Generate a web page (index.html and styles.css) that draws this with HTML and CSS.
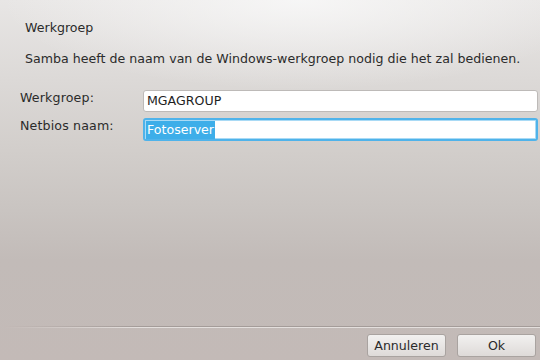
FILE: index.html
```html
<!DOCTYPE html>
<html>
<head>
<meta charset="utf-8">
<link rel="stylesheet" href="styles.css">
</head>
<body>
<div class="window">
  <div class="content">
    <div class="title">Werkgroep</div>
    <div class="desc">Samba heeft de naam van de Windows-werkgroep nodig die het zal bedienen.</div>
    <div class="form">
      <div class="label">Werkgroep:</div>
      <div class="field"><span class="value">MGAGROUP</span></div>
      <div class="label">Netbios naam:</div>
      <div class="field focus"><span class="value selected">Fotoserver</span></div>
    </div>
  </div>
  <div class="separator"></div>
  <div class="buttons">
    <div class="btn">Annuleren</div>
    <div class="btn">Ok</div>
  </div>
</div>
</body>
</html>
```
FILE: styles.css
```css
html, body {
  margin: 0;
  padding: 0;
  width: 540px;
  height: 360px;
  overflow: hidden;
}
body {
  font-family: "DejaVu Sans", sans-serif;
  font-size: 12.6px;
  color: #2b2b2b;
  background:
    radial-gradient(ellipse 300px 90px at 300px 0px, rgba(250,250,250,0.8), rgba(250,250,250,0) 100%),
    linear-gradient(to bottom, #e8e6e5 0px, #dcd9d7 80px, #d2cecb 150px, #c9c4c1 210px, #c2bbb8 260px, #c3bab7 360px);
}
.window {
  display: flex;
  flex-direction: column;
  height: 360px;
}
.content {
  flex: 1;
  padding: 20px 2px 0 20px;
}
.title {
  padding-left: 5px;
  line-height: 15px;
}
.desc {
  padding-left: 5px;
  margin-top: 16px;
  line-height: 15px;
  letter-spacing: 0.02px;
}
.form {
  display: grid;
  grid-template-columns: 123px 1fr;
  row-gap: 6px;
  margin-top: 24px;
}
.label {
  line-height: 16px;
  letter-spacing: 0.15px;
}
.field {
  height: 22px;
  box-sizing: border-box;
  background: #fff;
  border: 1px solid #bdbab8;
  border-radius: 3px;
  display: flex;
  align-items: center;
  padding-left: 3px;
  color: #1e1e1e;
}
.field.focus {
  height: 23px;
  border: 2px solid #4fb3ea;
  padding-left: 1px;
  box-shadow: inset 0 0 0 1px #a9daf5;
}
.value {
  line-height: 18px;
}
.selected {
  background: #3daee9;
  color: #fff;
  padding: 0 1px;
}
.separator {
  height: 2px;
  margin-left: 5px;
  background:
    linear-gradient(to right, rgba(195,186,183,1), rgba(195,186,183,0) 25%) ,
    linear-gradient(to bottom, #a49c99 0 1px, #e4dfdd 1px 2px);
}
.buttons {
  display: flex;
  justify-content: flex-end;
  gap: 11px;
  padding: 6px 4px 3px 0;
}
.btn {
  width: 79px;
  height: 23px;
  box-sizing: border-box;
  border: 1px solid #a9a3a0;
  border-radius: 3px;
  background: linear-gradient(to bottom, #f2f1f0, #dedad8);
  display: flex;
  align-items: center;
  justify-content: center;
  color: #2b2b2b;
}
```
